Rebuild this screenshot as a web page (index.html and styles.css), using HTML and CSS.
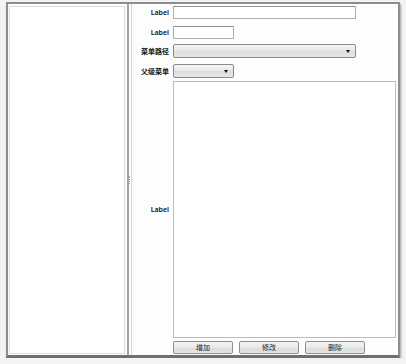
FILE: index.html
```html
<!DOCTYPE html>
<html lang="zh-CN">
   <head>
      <meta charset="UTF-8">
      <title>菜单管理</title>
      <link rel="stylesheet" href="styles.css">
   </head>
   <body>
      <div class="window">
         <div class="side-panel"></div>
         <div class="splitter"><span class="grip"></span></div>
         <div class="form">
            <div class="row row-1">
               <label class="field-label">Label</label>
               <div class="textbox wide"></div>
            </div>
            <div class="row row-2">
               <label class="field-label">Label</label>
               <div class="textbox narrow"></div>
            </div>
            <div class="row row-3">
               <label class="field-label">菜单路径</label>
               <div class="combo wide"><span class="arrow"></span></div>
            </div>
            <div class="row row-4">
               <label class="field-label">父级菜单</label>
               <div class="combo narrow"><span class="arrow"></span></div>
            </div>
            <div class="row row-area">
               <label class="field-label">Label</label>
               <div class="textarea"></div>
            </div>
            <div class="row row-buttons">
               <span class="field-label"></span>
               <div class="buttons">
                  <button class="btn">增加</button>
                  <button class="btn">修改</button>
                  <button class="btn">删除</button>
               </div>
            </div>
         </div>
      </div>
   </body>
</html>
```

FILE: styles.css
```css
body {
margin: 0;
background-color: #f2f3f4;
font-family: "Noto Sans", "Noto Sans CJK SC", sans-serif;
font-size: 7px;
color: #111;
}
.window {
box-sizing: border-box;
width: 394px;
height: 356px;
margin: 2px 0 0 6px;
border: 2px solid #8d8d8d;
border-bottom: 3px solid #6f6f6f;
background-color: #fdfdfd;
box-shadow: 1px 2px 2px rgba(0, 0, 0, 0.35);
display: flex;
}
.side-panel {
width: 114px;
margin: 2px 0 1px 1px;
border: 1px solid #d6dce4;
background-color: #fff;
}
.splitter {
width: 2px;
margin-left: 2px;
border-left: 2px solid #a3a3a3;
border-right: 1px solid #cfd6de;
display: flex;
align-items: center;
justify-content: center;
}
.grip {
width: 1px;
height: 8px;
border-left: 1px dotted #9aa4ae;
}
.form {
flex: 1;
display: flex;
flex-direction: column;
padding: 2px 2px 1px 0;
}
.row {
display: flex;
align-items: center;
}
.field-label {
width: 37px;
padding-right: 4px;
text-align: right;
font-weight: 600;
line-height: 1;
white-space: nowrap;
}
.row-1 { height: 13px; }
.row-2 { height: 13px; margin-top: 7px; }
.row-3 { height: 14px; margin-top: 5px; }
.row-4 { height: 14px; margin-top: 6px; }
.row-area { flex: 1; margin-top: 3px; align-items: stretch; }
.row-area .field-label {
align-self: center;
}
.row-buttons { height: 13px; margin-top: 3px; }
.textbox {
box-sizing: border-box;
height: 13px;
border: 1px solid #abadb3;
border-top-color: #8e9095;
border-radius: 1px;
background-color: #fff;
}
.wide { width: 183px; }
.narrow { width: 61px; }
.combo {
box-sizing: border-box;
height: 14px;
border: 1px solid #8a8a8a;
border-radius: 2px;
background: linear-gradient(#f6f6f6, #e6e6e6 50%, #dcdcdc 51%, #e8e8e8);
display: flex;
align-items: center;
justify-content: flex-end;
padding-right: 5px;
}
.arrow {
width: 0;
height: 0;
border-left: 2px solid transparent;
border-right: 2px solid transparent;
border-top: 3px solid #111;
}
.textarea {
flex: 1;
box-sizing: border-box;
border: 1px solid #b9bcc2;
background-color: #fff;
}
.buttons {
display: flex;
gap: 6px;
}
.btn {
box-sizing: border-box;
width: 60px;
height: 13px;
padding: 0;
font-family: inherit;
font-size: 7px;
color: #222;
border: 1px solid #8e8f8f;
border-radius: 2px;
background: linear-gradient(#f4f4f4, #e9e9e9 50%, #dadada 51%, #e4e4e4);
line-height: 1;
}
```
